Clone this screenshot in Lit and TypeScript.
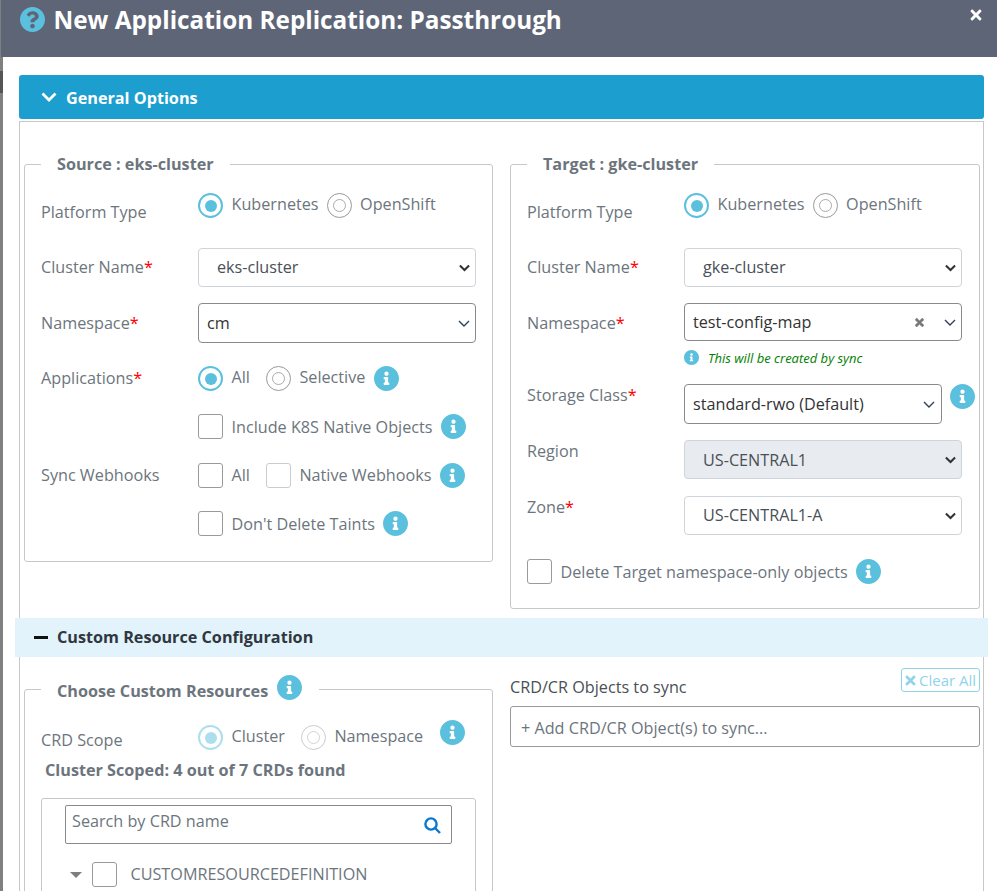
import { LitElement, html, css, svg } from "lit";
import { customElement } from "lit/decorators.js";

const INFO = "M256 8C119.043 8 8 119.083 8 256c0 136.997 111.043 248 248 248s248-111.003 248-248C504 119.083 392.957 8 256 8zm0 110c23.196 0 42 18.804 42 42s-18.804 42-42 42-42-18.804-42-42 18.804-42 42-42zm56 254c0 6.627-5.373 12-12 12h-88c-6.627 0-12-5.373-12-12v-24c0-6.627 5.373-12 12-12h12v-64h-12c-6.627 0-12-5.373-12-12v-24c0-6.627 5.373-12 12-12h64c6.627 0 12 5.373 12 12v100h12c6.627 0 12 5.373 12 12v24z";
const QUESTION = "M504 256c0 136.997-111.043 248-248 248S8 392.997 8 256C8 119.083 119.043 8 256 8s248 111.083 248 248zM262.655 90c-54.497 0-89.255 22.957-116.549 63.758-3.536 5.286-2.353 12.415 2.715 16.258l34.699 26.31c5.205 3.947 12.621 3.008 16.665-2.122 17.864-22.658 30.113-35.797 57.303-35.797 20.429 0 45.698 13.148 45.698 32.958 0 14.976-12.363 22.667-32.534 33.976C247.128 238.528 216 254.941 216 296v4c0 6.627 5.373 12 12 12h56c6.627 0 12-5.373 12-12v-1.333c0-28.462 83.186-29.647 83.186-106.667 0-58.002-60.165-102-116.531-102zM256 338c-25.365 0-46 20.635-46 46 0 25.364 20.635 46 46 46s46-20.636 46-46c0-25.365-20.635-46-46-46z";
const TIMES = "M242.72 256l100.07-100.07c12.28-12.28 12.28-32.19 0-44.48l-22.24-22.24c-12.28-12.28-32.19-12.28-44.48 0L176 189.28 75.93 89.21c-12.28-12.28-32.19-12.28-44.48 0L9.21 111.45c-12.28 12.28-12.28 32.19 0 44.48L109.28 256 9.21 356.07c-12.28 12.28-12.28 32.19 0 44.48l22.24 22.24c12.28 12.28 32.2 12.28 44.48 0L176 322.72l100.07 100.07c12.28 12.28 32.2 12.28 44.48 0l22.24-22.24c12.28-12.28 12.28-32.19 0-44.48L242.72 256z";

const info = (cls = "") => html`<svg class="info ${cls}" viewBox="8 8 496 496"><path d=${INFO}></path></svg>`;
const times = (cls: string) => html`<svg class=${cls} viewBox="0 64 352 384"><path d=${TIMES}></path></svg>`;
const radio = (on: boolean, off = false) =>
  html`<span class="radio ${on ? "on" : ""} ${off ? "off" : ""}"><i></i></span>`;
const check = (light = false) => html`<span class="check ${light ? "light" : ""}"></span>`;
const req = html`<span class="req">*</span>`;
const thinChevron = html`<svg class="thin" viewBox="0 0 12 7">${svg`<polyline points="1,1 6,6 11,1"></polyline>`}</svg>`;

@customElement("app-root")
export class AppRoot extends LitElement {
  static styles = css`
    :host { display: block; font-family: "Open Sans", sans-serif; color: #6c757d; font-size: 16.2px; }
    * { box-sizing: border-box; }
    .page { width: 997px; height: 891px; overflow: hidden; background: linear-gradient(#808080 0 71px, #555 71px 93px, #808080 93px); padding-left: 1px; }
    .header { height: 57px; background: #5e6577; display: flex; align-items: flex-start; padding: 7px 15px 0 19px; color: #fff; }
    .qmark { width: 25px; height: 25px; fill: #5bc0de; flex: none; }
    .title { margin: -1px 0 0 8.5px; font-size: 24.3px; line-height: 28px; font-weight: 700; flex: 1; }
    .close { width: 12px; height: 12px; fill: #fff; margin-top: 2px; }
    .body { height: 834px; background: #fff; margin-left: 2px; padding: 18px 13px 0 16px; overflow: hidden; }
    .bar { height: 44px; background: #1c9fce; border-radius: 3px; color: #fff; display: flex; align-items: center; padding-left: 22px; font-weight: 700; width: 965px; }
    .bar svg { width: 16px; height: 10px; fill: none; stroke: #fff; stroke-width: 2.8; margin-right: 9px; }
    .bar span { padding-top: 1px; }
    .box { margin-top: 2px; width: 965px; border: 1px solid #c8c8c8; padding: 0 3px 0 4px; height: 900px; }
    .cols { display: grid; grid-template-columns: 469px 470px; column-gap: 17px; align-items: start; }
    fieldset { margin: 30px 0 0; padding: 0 16px 0; border: 1px solid #c4c7cc; border-radius: 3px; min-width: 0; }
    legend { padding: 0 16px; font-weight: 700; line-height: 24px; height: 24px; color: #6c757d; }
    .row { display: grid; grid-template-columns: 157px 1fr; align-items: center; }
    .row > .lbl { line-height: 24px; white-space: nowrap; }
    .up > .lbl { position: relative; top: -1px; }
    .first { margin-top: 17px; height: 55px; align-items: start; }
    .first .lbl { padding-top: 7px; }
    .m16 { margin-bottom: 16px; }
    .m23 { margin-bottom: 23px; }
    .m24 { margin-bottom: 24px; }
    .m17 { margin-bottom: 17px; }
    .pb25 { margin-bottom: 25px; }
    .pb24 { margin-bottom: 24px; }
    .top { align-items: start; }
    .top .lbl { margin-top: -1px; }
    .top .lbl.ns { margin-top: 8px; }
    .req { color: #f00; }
    .opts { display: flex; align-items: center; height: 25px; line-height: 24px; white-space: nowrap; }
    .opts .t { margin-left: 8.5px; position: relative; top: -2px; }
    .opts .t.flat { top: 0; }
    .opts .t.flat1 { top: -1px; }
    .g0 { margin-left: 8px; }
    .g1 { margin-left: 8.5px; }
    .g2 { margin-left: 16px; }
    .radio { width: 25px; height: 25px; border-radius: 50%; border: 1px solid #999; flex: none; display: flex; align-items: center; justify-content: center; }
    .radio i { width: 13px; height: 13px; border-radius: 50%; border: 1px solid #aaa; }
    .radio.on { border: 2px solid #5bc0de; }
    .radio.on i { width: 12px; height: 12px; background: #5bc0de; border: 0; }
    .radio.off { opacity: .5; }
    .check { width: 25px; height: 25px; border: 1px solid #9a9a9a; border-radius: 3px; flex: none; background: #fff; display: block; }
    .check.light { border-color: #ccc; }
    .info { width: 25px; height: 25px; fill: #5bc0de; flex: none; display: block; }
    select { font: inherit; color: #495057; height: 39px; width: 278px; border: 1px solid #ced4da; border-radius: 4px; padding: 0 24px 2px 18px; display: block; appearance: none; -webkit-appearance: none; opacity: 1;
      background: #fff url("data:image/svg+xml,%3Csvg xmlns='http://www.w3.org/2000/svg' viewBox='0 0 12 8'%3E%3Cpolyline points='1,1.2 6,6.2 11,1.2' fill='none' stroke='%23333' stroke-width='2.2'/%3E%3C/svg%3E") no-repeat right 5.5px center / 11px 8px; }
    select.dis { background-color: #e8ebef; padding-bottom: 0; }
    .combo { height: 40px; border: 1px solid #8a8a8a; border-radius: 4px; width: 278px; display: flex; align-items: center; padding: 0 5px 0 8px; color: #333; }
    .combo.tall38 { height: 38px; }
    .combo.sc { width: 258px; padding-right: 6px; }
    .combo span { flex: 1; }
    .combo.tall38 span { padding-bottom: 1px; }
    .thin { width: 12px; height: 7px; fill: none; stroke: #2f4058; stroke-width: 1.4; flex: none; }
    .sm-x { width: 9px; height: 9px; fill: #777; stroke: #777; stroke-width: 30; margin-right: 20px; flex: none; }
    .help { display: flex; align-items: center; height: 15px; margin: 9px 0 19px; font-size: 13px; font-style: italic; color: #008000; }
    .help .info { width: 15px; height: 15px; margin-right: 9px; }
    .sc-wrap { display: flex; align-items: flex-start; gap: 8px; }
    .band { margin: 9px -8px 0 -9px; height: 39px; background: #e2f3fb; display: flex; align-items: center; padding-left: 19px; font-weight: 700; color: #2f3740; }
    .band span { padding-bottom: 2px; }
    .band b { width: 14px; height: 2.5px; background: #111; margin-right: 9px; display: block; }
    .lower { display: grid; grid-template-columns: 469px 470px; column-gap: 17px; align-items: start; }
    .lower fieldset { margin-top: 18px; height: 400px; }
    .lower legend { display: flex; height: 29px; padding: 0 17px 0 16px; line-height: 24px; }
    .lower legend span { padding-top: 4px; line-height: 24px; }
    .lower legend .info { margin-left: 9px; }
    .scope { display: grid; grid-template-columns: 157px auto 1fr; margin-top: 21px; height: 31px; align-items: start; }
    .scope .lbl { padding-top: 3px; line-height: 24px; }
    .scope .info { margin: -5px 0 0 17px; }
    .found { font-weight: 700; line-height: 24px; margin: 2px 0 16px 4px; white-space: nowrap; }
    .tree { border: 1px solid #c4c7cc; border-radius: 3px; width: 435px; height: 200px; padding: 6px 23px; }
    .search { height: 39px; width: 387px; border: 1px solid #8a8a8a; border-radius: 2px; display: flex; padding: 3px 10px 0 6px; line-height: 24px; justify-content: space-between; }
    .search svg { width: 17px; height: 17px; fill: none; stroke: #0a78d0; stroke-width: 2.4; margin-top: 8px; }
    .node { display: flex; align-items: center; margin-top: 18px; height: 25px; white-space: nowrap; }
    .caret { width: 0; height: 0; border-left: 6.5px solid transparent; border-right: 6.5px solid transparent; border-top: 6.5px solid #7f7f7f; margin: 0 10px 0 5px; }
    .node .t { margin-left: 13.5px; position: relative; top: -1px; }
    .right { display: flex; flex-direction: column; padding-top: 11px; }
    .right-top { display: flex; justify-content: space-between; align-items: flex-end; height: 31px; }
    .right-top > span { color: #495057; line-height: 24px; }
    .clear { align-self: flex-start; display: flex; align-items: center; width: 79px; height: 24px; border: 1px solid #8fd4ea; border-radius: 3px; color: #8fd4ea; font-size: 15px; padding-left: 3px; white-space: nowrap; }
    .clear svg { width: 11px; height: 11px; fill: #8fd4ea; margin-right: 3px; flex: none; }
    .add { margin-top: 7px; height: 41px; border: 1px solid #999; border-radius: 3px; padding: 9px 10px 0; line-height: 24px; }
  `;

  render() {
    return html`
      <div class="page">
        <div class="header">
          <svg class="qmark" viewBox="8 8 496 496"><path d=${QUESTION}></path></svg>
          <h1 class="title">New Application Replication: Passthrough</h1>
          ${times("close")}
        </div>
        <div class="body">
          <div class="bar">
            <svg viewBox="0 0 16 10"><polyline points="1.5,1.5 8,8 14.5,1.5"></polyline></svg><span>General Options</span>
          </div>
          <div class="box">
            <div class="cols">
              <fieldset>
                <legend>Source : eks-cluster</legend>
                <div class="row first">
                  <span class="lbl">Platform Type</span>
                  <div class="opts">${radio(true)}<span class="t">Kubernetes</span><span class="g0"></span>${radio(false)}<span class="t">OpenShift</span></div>
                </div>
                <div class="row up m16">
                  <span class="lbl">Cluster Name${req}</span>
                  <select><option>eks-cluster</option></select>
                </div>
                <div class="row m23">
                  <span class="lbl">Namespace${req}</span>
                  <div class="combo"><span>cm</span>${thinChevron}</div>
                </div>
                <div class="row up m23">
                  <span class="lbl">Applications${req}</span>
                  <div class="opts">${radio(true)}<span class="t">All</span><span class="g2"></span>${radio(false)}<span class="t">Selective</span><span class="g1"></span>${info()}</div>
                </div>
                <div class="row m24">
                  <span class="lbl"></span>
                  <div class="opts">${check()}<span class="t flat">Include K8S Native Objects</span><span class="g1"></span>${info()}</div>
                </div>
                <div class="row up m23">
                  <span class="lbl">Sync Webhooks</span>
                  <div class="opts">${check()}<span class="t flat1">All</span><span class="g2"></span>${check(true)}<span class="t flat1">Native Webhooks</span><span class="g1"></span>${info()}</div>
                </div>
                <div class="row pb25">
                  <span class="lbl"></span>
                  <div class="opts">${check()}<span class="t flat">Don't Delete Taints</span><span class="g1"></span>${info()}</div>
                </div>
              </fieldset>
              <fieldset>
                <legend>Target : gke-cluster</legend>
                <div class="row first">
                  <span class="lbl">Platform Type</span>
                  <div class="opts">${radio(true)}<span class="t">Kubernetes</span><span class="g0"></span>${radio(false)}<span class="t">OpenShift</span></div>
                </div>
                <div class="row up m16">
                  <span class="lbl">Cluster Name${req}</span>
                  <select><option>gke-cluster</option></select>
                </div>
                <div class="row top">
                  <span class="lbl ns">Namespace${req}</span>
                  <div>
                    <div class="combo tall38"><span>test-config-map</span>${times("sm-x")}${thinChevron}</div>
                    <div class="help">${info()}<span>This will be created by sync</span></div>
                  </div>
                </div>
                <div class="row top m16">
                  <span class="lbl">Storage Class${req}</span>
                  <div class="sc-wrap"><div class="combo sc"><span>standard-rwo (Default)</span>${thinChevron}</div>${info()}</div>
                </div>
                <div class="row top m17">
                  <span class="lbl">Region</span>
                  <select class="dis" disabled><option>US-CENTRAL1</option></select>
                </div>
                <div class="row top pb24">
                  <span class="lbl">Zone${req}</span>
                  <select><option>US-CENTRAL1-A</option></select>
                </div>
                <div class="opts pb24">${check()}<span class="t flat">Delete Target namespace-only objects</span><span class="g1"></span>${info()}</div>
              </fieldset>
            </div>
            <div class="band"><b></b><span>Custom Resource Configuration</span></div>
            <div class="lower">
              <fieldset>
                <legend><span>Choose Custom Resources</span>${info()}</legend>
                <div class="scope">
                  <span class="lbl">CRD Scope</span>
                  <div class="opts">${radio(true, true)}<span class="t">Cluster</span><span class="g2"></span>${radio(false, true)}<span class="t">Namespace</span></div>
                  ${info()}
                </div>
                <div class="found">Cluster Scoped: 4 out of 7 CRDs found</div>
                <div class="tree">
                  <div class="search"><span>Search by CRD name</span>
                    <svg viewBox="0 0 17 17"><circle cx="7" cy="7" r="5.6"></circle><line x1="11" y1="11" x2="16" y2="16"></line></svg>
                  </div>
                  <div class="node"><span class="caret"></span>${check()}<span class="t">CUSTOMRESOURCEDEFINITION</span></div>
                </div>
              </fieldset>
              <div class="right">
                <div class="right-top">
                  <span>CRD/CR Objects to sync</span>
                  <div class="clear">${times("")}Clear All</div>
                </div>
                <div class="add">+ Add CRD/CR Object(s) to sync...</div>
              </div>
            </div>
          </div>
        </div>
      </div>
    `;
  }
}
